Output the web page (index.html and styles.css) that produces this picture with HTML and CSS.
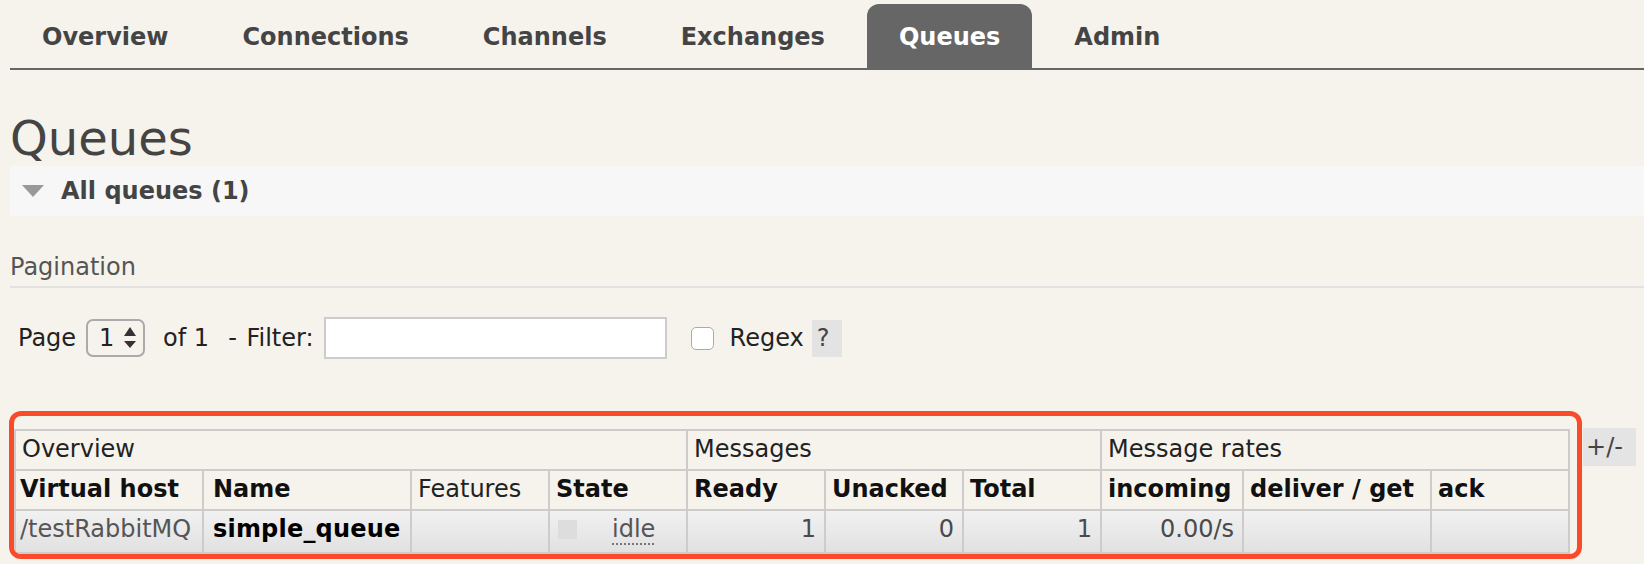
FILE: index.html
```html
<!DOCTYPE html>
<html>
<head>
<meta charset="utf-8">
<title>Queues</title>
<link rel="stylesheet" href="styles.css">
</head>
<body>
<div class="page">
  <ul class="tabs">
    <li><a class="tab">Overview</a></li>
    <li><a class="tab">Connections</a></li>
    <li><a class="tab">Channels</a></li>
    <li><a class="tab">Exchanges</a></li>
    <li><a class="tab selected">Queues</a></li>
    <li><a class="tab">Admin</a></li>
  </ul>

  <h1 class="title">Queues</h1>

  <div class="section-head">
    <span class="arrow"></span>
    <span class="section-title">All queues (1)</span>
  </div>

  <h3 class="subhead">Pagination</h3>

  <div class="pager">
    <span class="lbl">Page</span>
    <span class="select"><span class="sel-val">1</span><svg class="sel-arrows" width="12" height="22" viewBox="0 0 12 22"><path d="M6 0 L12 9 L0 9 Z M0 14 L12 14 L6 21 Z" fill="#333"/></svg></span>
    <span class="lbl of">of 1</span>
    <span class="lbl filter-label">- Filter:</span>
    <span class="input"></span>
    <span class="checkbox"></span>
    <span class="lbl regex">Regex</span>
    <span class="help">?</span>
  </div>

  <div class="table-area">
    <div class="highlight">
      <table class="list">
        <colgroup>
          <col class="w-vh"><col class="w-name"><col class="w-138"><col class="w-138">
          <col class="w-138"><col class="w-138"><col class="w-138">
          <col class="w-inc"><col class="w-del"><col class="w-138">
        </colgroup>
        <thead>
          <tr class="group-row">
            <th colspan="4">Overview</th>
            <th colspan="3">Messages</th>
            <th colspan="3">Message rates</th>
          </tr>
          <tr class="head-row">
            <th class="first">Virtual host</th>
            <th class="name-col">Name</th>
            <th class="plain">Features</th>
            <th>State</th>
            <th>Ready</th>
            <th>Unacked</th>
            <th>Total</th>
            <th>incoming</th>
            <th>deliver / get</th>
            <th>ack</th>
          </tr>
        </thead>
        <tbody>
          <tr class="data-row">
            <td class="vhost first">/testRabbitMQ</td>
            <td class="qname name-col">simple_queue</td>
            <td></td>
            <td><span class="status"></span><abbr class="state">idle</abbr></td>
            <td class="num">1</td>
            <td class="num">0</td>
            <td class="num">1</td>
            <td class="num">0.00/s</td>
            <td></td>
            <td></td>
          </tr>
        </tbody>
      </table>
    </div>
    <span class="colopts">+/-</span>
  </div>
</div>
</body>
</html>
```

FILE: styles.css
```css
* { box-sizing: border-box; }

html, body {
  margin: 0;
  padding: 0;
  background: #f6f3ec;
}

body {
  font-family: "DejaVu Sans", Verdana, sans-serif;
  font-size: 24px;
  color: #444;
  width: 1644px;
  height: 564px;
  overflow: hidden;
}

.page {
  padding: 4px 0 0 10px;
}

/* navigation tabs */
.tabs {
  list-style: none;
  margin: 0;
  padding: 0;
  display: flex;
  border-bottom: 2px solid #666;
}

.tabs li {
  margin-right: 10px;
}

.tab {
  display: block;
  padding: 19px 32px 17px;
  line-height: 28px;
  font-weight: bold;
  color: #444;
  text-decoration: none;
  border-radius: 12px 12px 0 0;
}

.tab.selected {
  background: #666;
  color: #fff;
}

/* title */
.title {
  margin: 41px 0 0 0;
  font-size: 48px;
  font-weight: normal;
  line-height: 55px;
  color: #444;
}

/* collapsible section header */
.section-head {
  display: flex;
  align-items: center;
  height: 50px;
  background: #f7f7f7;
}

.arrow {
  width: 0;
  height: 0;
  border-left: 11px solid transparent;
  border-right: 11px solid transparent;
  border-top: 12px solid #999;
  margin-left: 12px;
  margin-right: 17px;
}

.section-title {
  font-weight: bold;
  line-height: 28px;
  color: #444;
}

/* pagination */
.subhead {
  margin: 37px 0 0 0;
  font-size: 24px;
  font-weight: normal;
  line-height: 28px;
  padding-bottom: 5px;
  border-bottom: 2px solid #e2e2e2;
  color: #555;
}

.pager {
  display: flex;
  align-items: center;
  margin-top: 29px;
  padding-left: 8px;
  height: 42px;
  color: #222;
}

.lbl {
  line-height: 28px;
  white-space: nowrap;
}

.select {
  display: flex;
  align-items: center;
  margin-left: 10px;
  width: 59px;
  height: 38px;
  border: 2px solid #aaa;
  border-radius: 7px;
  padding-left: 11px;
  background: transparent;
}

.sel-val {
  line-height: 28px;
  color: #222;
}

.sel-arrows {
  display: block;
  margin-left: 10px;
}

.of {
  margin-left: 18px;
}

.filter-label {
  margin-left: 19px;
  word-spacing: 2px;
}

.input {
  display: block;
  margin-left: 10px;
  width: 343px;
  height: 42px;
  background: #fff;
  border: 2px solid #ccc;
}

.checkbox {
  display: block;
  margin-left: 24px;
  width: 23px;
  height: 23px;
  background: #fff;
  border: 1.5px solid #aaa;
  border-radius: 5px;
}

.regex {
  margin-left: 16px;
}

.help {
  display: block;
  margin-left: 8px;
  width: 30px;
  height: 37px;
  line-height: 37px;
  padding-left: 5px;
  background: #e3e3e3;
  color: #444;
}

/* queue table */
.table-area {
  display: flex;
  align-items: flex-start;
  margin-top: 52px;
  margin-left: -1px;
}

.highlight {
  border: 5px solid #f94a2a;
  border-radius: 12px;
  padding: 13px 7px 0 0;
  overflow: hidden;
}

.list {
  table-layout: fixed;
  width: 1556px;
  border-collapse: separate;
  border-spacing: 0;
  border-top: 2px solid #ccc;
  border-left: 2px solid #ccc;
}

.w-vh { width: 188px; }
.w-name { width: 208px; }
.w-138 { width: 138px; }
.w-inc { width: 142px; }
.w-del { width: 188px; }

.list th,
.list td {
  border-right: 2px solid #ccc;
  border-bottom: 2px solid #ccc;
  padding: 4px 8px 6px 6px;
  line-height: 28px;
  text-align: left;
  white-space: nowrap;
  overflow: hidden;
}

.list .first {
  padding-left: 4px;
}

.list .name-col {
  padding-left: 9px;
}

.group-row th {
  font-weight: normal;
  color: #222;
}

.head-row th {
  font-weight: bold;
  color: #111;
}

.head-row th.plain {
  font-weight: normal;
  color: #222;
}

.data-row td {
  background: linear-gradient(#f1f1f1, #e1e1e1);
  padding-bottom: 9px;
  color: #555;
}

.data-row td.vhost {
  color: #555;
}

.data-row td.qname {
  font-weight: bold;
  color: #000;
  letter-spacing: 0.2px;
}

.data-row td.num {
  text-align: right;
  color: #4a4a4a;
}

.status {
  display: inline-block;
  width: 19px;
  height: 19px;
  margin-left: 2px;
  vertical-align: -2px;
  background: #ddd;
}

.state {
  margin-left: 35px;
  text-decoration: underline dotted #777;
  text-decoration-thickness: 2px;
  text-underline-offset: 6px;
  color: #555;
}

.colopts {
  display: block;
  margin-top: 17px;
  margin-left: 1px;
  width: 53px;
  height: 38px;
  line-height: 38px;
  padding-left: 3px;
  background: #e4e4e4;
  color: #444;
}
```
